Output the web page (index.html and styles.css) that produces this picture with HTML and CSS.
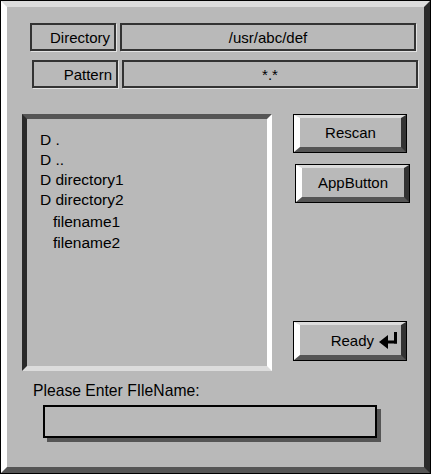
FILE: index.html
```html
<!DOCTYPE html>
<html lang="en">
<head>
    <meta charset="UTF-8">
    <title>File Selection</title>
    <link rel="stylesheet" href="styles.css">
</head>
<body>
    <div class="window">
        <div class="frame">
            <div class="field-row">
                <div class="field label">Directory</div>
                <div class="field value">/usr/abc/def</div>
            </div>
            <div class="field-row second">
                <div class="field label">Pattern</div>
                <div class="field value">*.*</div>
            </div>

            <div class="main">
                <div class="list">
                    <div class="item">D .</div>
                    <div class="item">D ..</div>
                    <div class="item">D directory1</div>
                    <div class="item">D directory2</div>
                    <div class="item file first">filename1</div>
                    <div class="item file">filename2</div>
                </div>

                <div class="buttons">
                    <button class="btn rescan"><span class="face">Rescan</span></button>
                    <button class="btn app"><span class="face">AppButton</span></button>
                    <button class="btn ready">
                        <span class="face right">Ready
                            <svg width="20" height="17" viewBox="0 0 20 17">
                                <polygon points="0,10 9,3 9,17" fill="#000"/>
                                <rect x="8" y="8.5" width="10" height="3" fill="#000"/>
                                <rect x="15" y="0" width="3" height="11.5" fill="#000"/>
                            </svg>
                        </span>
                    </button>
                </div>
            </div>

            <div class="prompt">Please Enter FIleName:</div>
            <div class="input"></div>
        </div>
    </div>
</body>
</html>
```

FILE: styles.css
```css
:root {
    --bg: #b9b9b9;
    --light: #dcdcdc;
    --dark: #2a2a2a;
    --mid: #555;
}

body {
    margin: 0;
    font-family: 'Liberation Sans', Arial, sans-serif;
    font-size: 15px;
    color: #000;
}

.window {
    width: 431px;
    height: 474px;
    box-sizing: border-box;
    border: 1px solid #000;
}

.frame {
    height: 100%;
    box-sizing: border-box;
    background: var(--bg);
    border-style: solid;
    border-width: 6px;
    border-color: var(--light) var(--dark) var(--mid) #fff;
    padding-top: 16px;
}

.field-row {
    display: grid;
    grid-template-columns: 86px 296px;
    gap: 4px;
    margin-left: 23px;
}

.field-row.second {
    margin-left: 25px;
    margin-top: 9px;
}

.field {
    height: 28px;
    box-sizing: border-box;
    border: 2px solid #333;
    box-shadow: 1px 1px 0 #e2e2e2;
    display: flex;
    align-items: center;
}

.label {
    justify-content: flex-end;
    padding-right: 4px;
}

.value {
    justify-content: center;
}

.main {
    display: flex;
    margin-top: 26px;
    padding-left: 15px;
}

.list {
    width: 250px;
    height: 257px;
    box-sizing: border-box;
    border-style: solid;
    border-width: 5px;
    border-color: var(--mid) #fff var(--light) var(--dark);
    padding: 11px 0 0 13px;
    font-size: 15.5px;
}

.item {
    line-height: 20px;
}

.file {
    padding-left: 13px;
    line-height: 21px;
}

.file.first {
    margin-top: 1px;
}

.buttons {
    display: flex;
    flex-direction: column;
    margin-left: 21px;
}

.btn {
    width: 114px;
    height: 39px;
    padding: 0;
    border: 1px solid #000;
    background: var(--bg);
    font: inherit;
    color: #000;
    display: flex;
}

.face {
    flex: 1;
    box-sizing: border-box;
    border-style: solid;
    border-width: 3px 5px 5px 6px;
    border-color: var(--light) #333 var(--mid) #fff;
    display: flex;
    align-items: center;
    justify-content: center;
}

.btn.app {
    width: 115px;
    margin: 11px 0 0 2px;
}

.btn.ready {
    height: 40px;
    margin-top: 118px;
}

.face.right {
    justify-content: flex-end;
    padding-right: 2px;
    gap: 5px;
}

.prompt {
    margin: 11px 0 0 26px;
    line-height: 18px;
    font-size: 15.7px;
}

.input {
    width: 334px;
    height: 33px;
    box-sizing: border-box;
    margin: 5px 0 0 36px;
    border: 2px solid #000;
    box-shadow: 4px 4px 0 var(--mid);
}
```
